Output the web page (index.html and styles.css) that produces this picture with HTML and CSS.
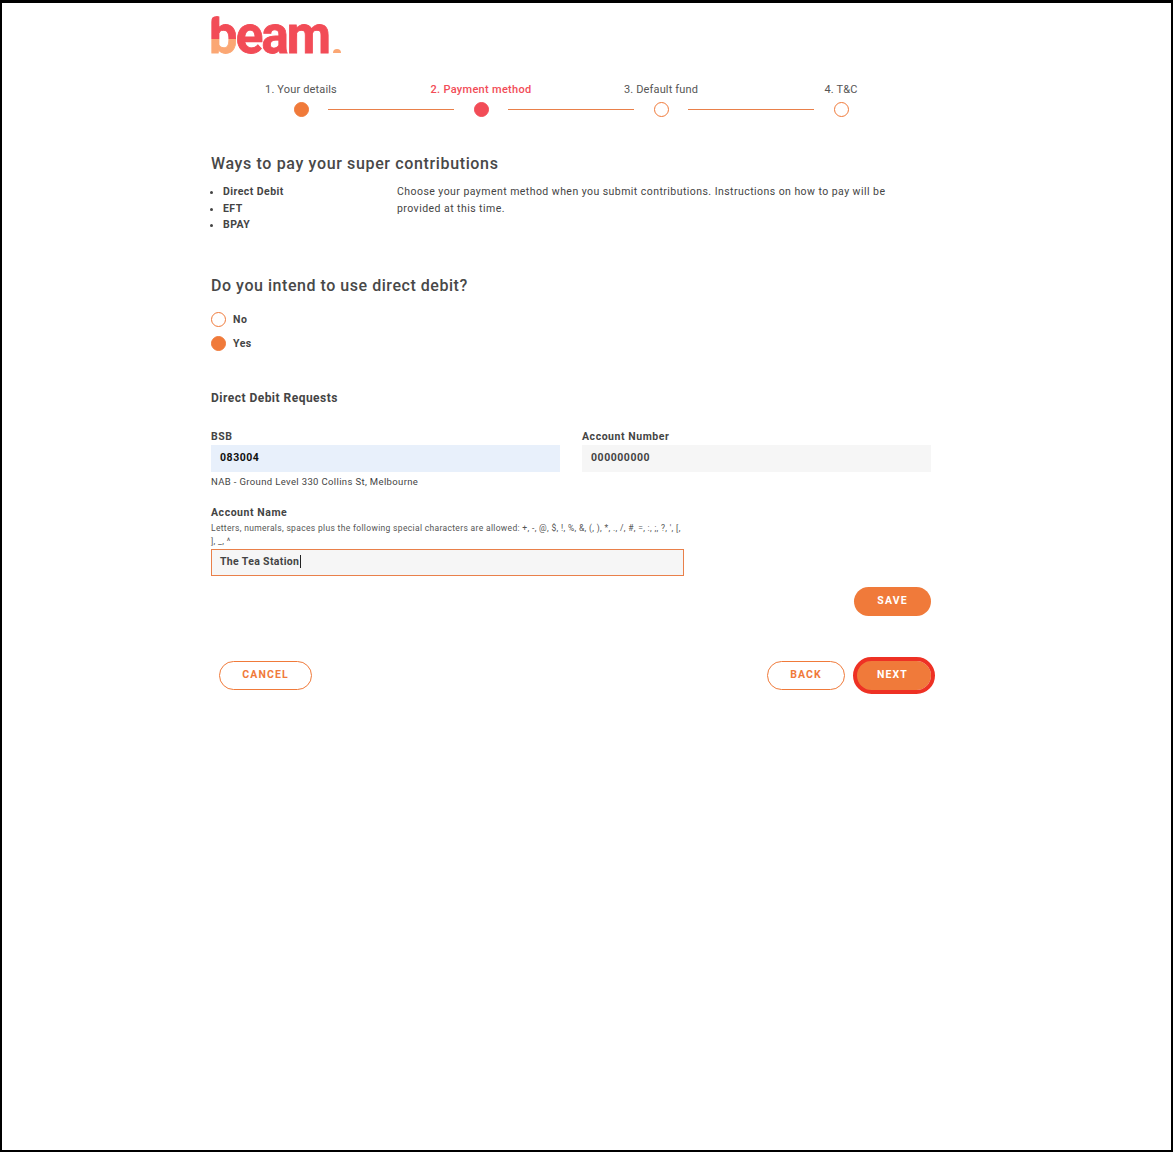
FILE: index.html
```html
<!DOCTYPE html>
<html lang="en">
<head>
<meta charset="utf-8">
<title>beam - Payment method</title>
<link rel="stylesheet" href="styles.css">
</head>
<body>
<div class="frame">
  <main class="content">
    <div class="logo"><span class="logo-b">b</span>eam<i class="logo-dot"></i></div>

    <ol class="step-labels">
      <li>1. Your details</li>
      <li class="current">2. Payment method</li>
      <li>3. Default fund</li>
      <li>4. T&amp;C</li>
    </ol>
    <div class="step-track">
      <span class="dot-cell"><i class="dot done"></i></span><span class="track-line"></span>
      <span class="dot-cell"><i class="dot active"></i></span><span class="track-line"></span>
      <span class="dot-cell"><i class="dot"></i></span><span class="track-line"></span>
      <span class="dot-cell"><i class="dot"></i></span>
    </div>

    <h2 class="title">Ways to pay your super contributions</h2>
    <div class="methods">
      <ul class="method-list">
        <li>Direct Debit</li>
        <li>EFT</li>
        <li>BPAY</li>
      </ul>
      <p class="method-text">Choose your payment method when you submit contributions. Instructions on how to pay will be provided at this time.</p>
    </div>

    <h2 class="title question">Do you intend to use direct debit?</h2>
    <div class="radios">
      <div class="radio"><i class="dot big"></i>No</div>
      <div class="radio"><i class="dot big done"></i>Yes</div>
    </div>

    <h3 class="section">Direct Debit Requests</h3>

    <div class="row-two">
      <div class="field">
        <div class="label">BSB</div>
        <div class="input autofill">083004</div>
        <div class="hint">NAB - Ground Level 330 Collins St, Melbourne</div>
      </div>
      <div class="field">
        <div class="label">Account Number</div>
        <div class="input filled">000000000</div>
      </div>
    </div>

    <div class="field name-field">
      <div class="label">Account Name</div>
      <div class="rules">Letters, numerals, spaces plus the following special characters are allowed: +, -, @, $, !, %, &amp;, (, ), *, ., /, #, =, :, ;, ?, ', [, ], _, ^</div>
      <div class="input focused"><span class="caret">The Tea Station</span></div>
    </div>

    <div class="save-row"><button class="btn solid" type="button">SAVE</button></div>

    <div class="nav-row">
      <button class="btn ghost cancel" type="button">CANCEL</button>
      <div class="nav-right">
        <button class="btn ghost back" type="button">BACK</button>
        <button class="btn solid next" type="button">NEXT</button>
      </div>
    </div>
  </main>
</div>
</body>
</html>
```
FILE: styles.css
```css
* { box-sizing: border-box; }
html, body { margin: 0; padding: 0; background: #fff; }
body { font-family: Roboto, "Liberation Sans", sans-serif; color: #444; }
.frame {
  width: 1173px; height: 1152px;
  border: 2px solid #000; border-top-width: 3px;
  padding-left: 209px;
}
.content { width: 720px; }

.logo {
  display: flex; align-items: baseline;
  height: 66px; margin-left: -2px;
  font-family: Roboto, sans-serif; font-weight: 700;
  font-size: 51px; line-height: 66px; letter-spacing: -1.9px;
  color: #f24c57; -webkit-text-stroke: 0.8px #f24c57;
}
.logo-b {
  background: linear-gradient(#f24c57 0 55%, #fba774 55%);
  -webkit-background-clip: text; background-clip: text;
  color: transparent; -webkit-text-stroke: 0.8px transparent;
  clip-path: path("M2 70 V19 Q2 13 8 13 Q14 13 14 19 V21 H40 V70 Z");
}
.logo-dot {
  display: block; width: 8px; height: 4px; margin-left: 4px;
  background: #fba774; border-radius: 4px 4px 0 0;
}

.step-labels {
  display: grid; grid-template-columns: repeat(4, 180px);
  list-style: none; margin: 14px 0 0; padding: 0;
  font-size: 11px; line-height: 14px; letter-spacing: .15px; text-align: center; color: #555;
}
.step-labels .current { color: #f24c57; font-weight: 500; letter-spacing: .3px; }
.step-track { display: flex; align-items: center; margin: 4px 0 0 63px; height: 16px; }
.dot-cell { width: 54px; display: flex; justify-content: center; }
.track-line { width: 126px; height: 1px; background: #e9804a; }
.dot {
  display: block; width: 15px; height: 15px; border-radius: 50%;
  border: 1px solid #f07a3a; background: #fff;
}
.dot.done { background: #f07a3a; }
.dot.active { background: #f24c57; border-color: #f24c57; }

.title { margin: 37px 0 0; font-size: 16px; line-height: 20px; font-weight: 500; letter-spacing: .64px; color: #484848; }
.methods { display: flex; margin-top: 10px; font-size: 10.5px; line-height: 16.5px; }
.method-list { width: 186px; margin: 0; padding: 0 0 0 12px; font-weight: 700; letter-spacing: .45px; }
.method-text { width: 500px; margin: 0; letter-spacing: .45px; color: #444; }

.title.question { margin-top: 42px; letter-spacing: .54px; }
.radios { margin-top: 16px; display: flex; flex-direction: column; gap: 9px; }
.radio { display: flex; align-items: center; gap: 7px; font-size: 10.5px; line-height: 15px; font-weight: 700; letter-spacing: .5px; }

.section { margin: 39px 0 0; font-size: 12px; line-height: 16px; font-weight: 700; letter-spacing: .48px; }

.row-two { display: flex; gap: 22px; margin-top: 24px; }
.row-two .field { width: 349px; }
.label { font-size: 10.5px; line-height: 14px; font-weight: 700; letter-spacing: .55px; }
.input {
  height: 27px; margin-top: 1px; padding: 0 9px 2px;
  display: flex; align-items: center;
  font-size: 10.5px; font-weight: 700; letter-spacing: .55px;
}
.autofill { background: #e8f0fb; color: #111; }
.filled { background: #f6f6f6; }
.hint { margin-top: 3px; font-size: 9.5px; line-height: 14px; letter-spacing: .36px; }

.name-field { width: 473px; margin-top: 17px; }
.rules { margin-top: 2px; font-size: 8.5px; line-height: 13px; letter-spacing: .33px; color: #555; }
.input.focused { margin-top: 1px; background: #f6f6f6; border: 1px solid #e9804a; padding: 0 8px 2px; letter-spacing: .35px; }
.caret { border-right: 1px solid #222; padding-right: 1px; }

.save-row { display: flex; justify-content: flex-end; margin-top: 11px; }
.btn {
  height: 29px; border-radius: 15px; font-family: inherit;
  font-size: 10.5px; font-weight: 700; letter-spacing: 1.1px; padding: 0 0 2px;
}
.solid { width: 77px; background: #f07a3a; border: 0; color: #fff; }
.ghost { background: #fff; border: 1px solid #f07a3a; color: #f07a3a; }
.nav-row { display: flex; justify-content: space-between; margin-top: 45px; padding-left: 8px; }
.cancel { width: 93px; }
.back { width: 78px; }
.nav-right { display: flex; gap: 9px; }
.next { position: relative; }
.next::after {
  content: ""; position: absolute; top: -4px; bottom: -4px; left: -1px; right: -4px;
  border: 4px solid #ee3124; border-radius: 19px;
}
```
